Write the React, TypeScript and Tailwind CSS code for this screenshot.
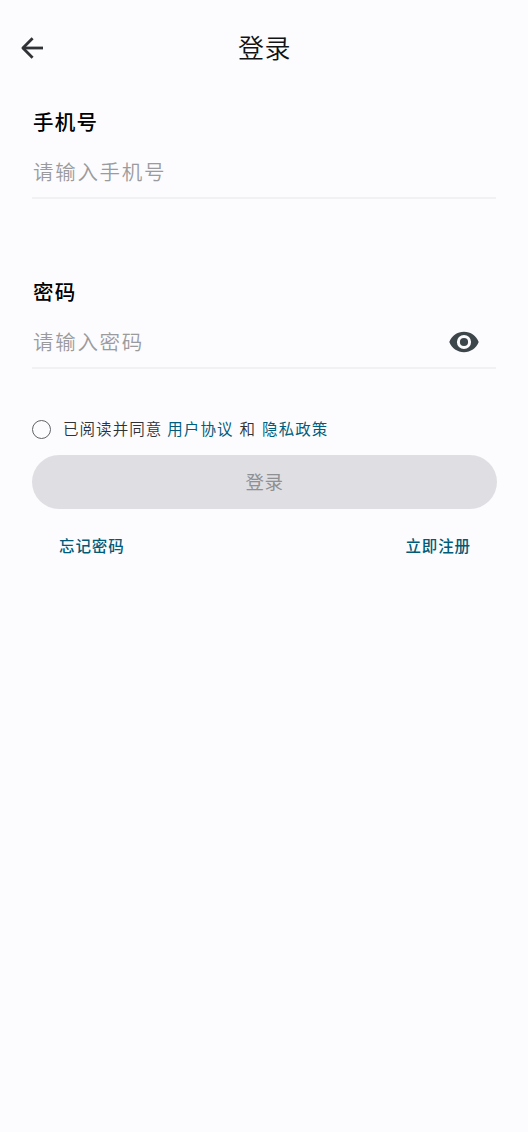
import { useState } from 'react';

const fields = [
  { id: 'phone', label: '手机号', placeholder: '请输入手机号', secret: false },
  { id: 'password', label: '密码', placeholder: '请输入密码', secret: true },
];

function BackIcon() {
  return (
    <svg viewBox="0 0 32 32" className="h-8 w-8" fill="none" stroke="currentColor" strokeWidth="2.8">
      <path d="M27 16H7.5" />
      <path d="M16.6 6.2 6.9 16l9.7 9.8" strokeLinejoin="round" />
    </svg>
  );
}

function EyeIcon() {
  return (
    <svg viewBox="0 0 32 32" className="h-8 w-8" fill="currentColor">
      <path
        fillRule="evenodd"
        d="M16 5.8C9.4 5.8 3.7 9.9 1.3 16c2.4 6.1 8.1 10.2 14.7 10.2S28.3 22.1 30.7 16C28.3 9.9 22.6 5.8 16 5.8Zm0 17.3a7.1 7.1 0 1 1 0-14.2 7.1 7.1 0 0 1 0 14.2Z"
      />
      <circle cx="16" cy="16" r="4.1" />
    </svg>
  );
}

export default function App() {
  const [agreed, setAgreed] = useState(false);
  const [showPassword, setShowPassword] = useState(false);

  return (
    <div className="min-h-screen bg-[#fcfcff] text-[#111315] font-['Noto_Sans_CJK_SC',sans-serif]">
      {/* Top bar */}
      <header className="grid h-24 grid-cols-[64px_1fr_64px] items-center">
        <button aria-label="返回" className="flex justify-center text-[#303236]">
          <BackIcon />
        </button>
        <h1 className="pb-0.5 pl-px text-center text-[26px] leading-10 font-[350] tracking-[0.5px]">登录</h1>
      </header>

      <form className="px-8" onSubmit={(e) => e.preventDefault()}>
        {fields.map((field) => (
          <div key={field.id} className="h-[170px] pt-[7px]">
            <label htmlFor={field.id} className="block h-9 pl-px text-[20.5px] leading-9 font-medium tracking-[1.2px] text-black">
              {field.label}
            </label>
            <div className="flex h-[60px] items-center border-b-2 border-[#f1f1f3] pt-2">
              <input
                id={field.id}
                type={field.secret && !showPassword ? 'password' : 'text'}
                placeholder={field.placeholder}
                className="min-w-0 flex-1 bg-transparent pb-px pl-px text-[20.5px] font-[350] tracking-[1.7px] outline-none placeholder:text-[#9b9b9d]"
              />
              {field.secret && (
                <button
                  type="button"
                  aria-label="显示密码"
                  onClick={() => setShowPassword(!showPassword)}
                  className="mr-4 text-[#3d464b]"
                >
                  <EyeIcon />
                </button>
              )}
            </div>
          </div>
        ))}

        {/* Agreement */}
        <div className="-mt-[26px] mb-1.5 flex h-[39px] items-center text-[15.5px] font-[350] tracking-[1.05px] text-[#303336]">
          <button
            type="button"
            role="checkbox"
            aria-checked={agreed}
            aria-label="同意协议"
            onClick={() => setAgreed(!agreed)}
            className="mr-3 h-[19px] w-[19px] rounded-full border border-[#5f6265]"
          />
          <p className="flex pb-0.5">
            <span>已阅读并同意</span>
            <a className="ml-[5px] font-normal text-[#005e7c]">用户协议</a>
            <span className="mx-1.5">和</span>
            <a className="font-normal text-[#005e7c]">隐私政策</a>
          </p>
        </div>

        <button className="block h-[54px] w-[465px] rounded-full bg-[#dfdfe3] text-[18.5px] font-normal tracking-[0.5px] text-[#8f9093]">
          登录
        </button>

        <div className="flex justify-between pt-6 pr-[25px] pl-[27px] text-[15.5px] leading-6 font-medium tracking-[0.9px] text-[#005b78]">
          <a>忘记密码</a>
          <a>立即注册</a>
        </div>
      </form>
    </div>
  );
}
